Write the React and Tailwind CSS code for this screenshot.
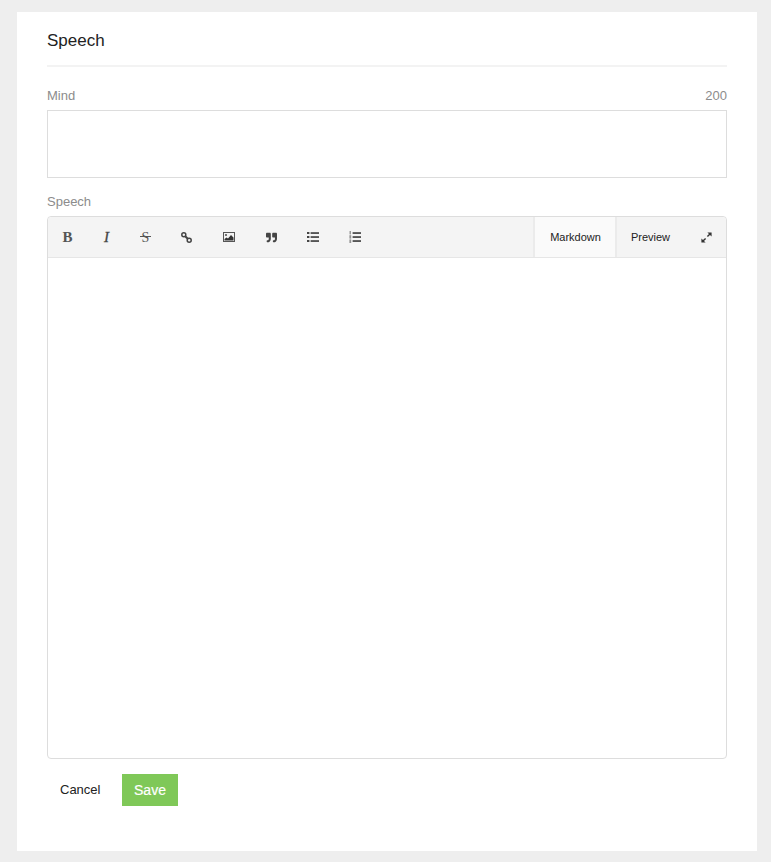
import { FaQuoteRight } from 'react-icons/fa'

const font = { fontFamily: '"Liberation Sans", Arial, sans-serif' }
const serif = { fontFamily: '"Liberation Serif", serif' }

function LinkIcon() {
  return (
    <svg width="11" height="11" viewBox="0 0 11 11" fill="none" stroke="#444" strokeWidth="1.5">
      <circle cx="2.8" cy="2.8" r="2" />
      <circle cx="8.2" cy="8.2" r="2" />
      <path d="M4.2 4.2 L6.8 6.8" strokeWidth="2" />
    </svg>
  )
}

function ImageIcon() {
  return (
    <svg width="12" height="10" viewBox="0 0 12 10">
      <rect x="0.5" y="0.5" width="11" height="9" fill="#f3f3f3" stroke="#555" />
      <circle cx="3" cy="3" r="1.1" fill="#555" />
      <path d="M1.5 8.5 V7 L3.5 5.4 L5 6.4 L8 3 L10.5 5.6 V8.5 Z" fill="#333" />
    </svg>
  )
}

function ListUl() {
  return (
    <svg width="12" height="10" viewBox="0 0 12 10" fill="#444">
      <rect x="0" y="0" width="2.4" height="2" />
      <rect x="0" y="4" width="2.4" height="2" />
      <rect x="0" y="8" width="2.4" height="2" />
      <rect x="3.6" y="0.2" width="8.4" height="1.7" />
      <rect x="3.6" y="4.2" width="8.4" height="1.7" />
      <rect x="3.6" y="8.2" width="8.4" height="1.7" />
    </svg>
  )
}

function ListOl() {
  return (
    <svg width="12" height="12" viewBox="0 0 12 12" fill="#444">
      <rect x="3.6" y="1.2" width="8.4" height="1.7" />
      <rect x="3.6" y="5.2" width="8.4" height="1.7" />
      <rect x="3.6" y="9.2" width="8.4" height="1.7" />
      <rect x="0.6" y="0" width="1.2" height="3.4" opacity="0.65" />
      <rect x="0.4" y="4.2" width="1.8" height="3.4" opacity="0.55" />
      <rect x="0.4" y="8.4" width="1.8" height="3.6" opacity="0.55" />
    </svg>
  )
}

function ExpandIcon() {
  return (
    <svg width="11" height="11" viewBox="0 0 11 11" fill="#333">
      <path d="M6.4 0.4 H10.6 V4.6 L9 3 L6.9 5.1 L5.9 4.1 L8 2 Z" />
      <path d="M4.6 10.6 H0.4 V6.4 L2 8 L4.1 5.9 L5.1 6.9 L3 9 Z" />
    </svg>
  )
}

const tools = [
  { w: 'w-[39px]', icon: <span className="text-[15px] font-bold text-[#555]" style={serif}>B</span> },
  { w: 'w-[39px]', icon: <span className="text-[15px] italic text-[#444] [-webkit-text-stroke:0.3px_#444]" style={serif}>I</span> },
  {
    w: 'w-[39px]',
    icon: (
      <span className="relative text-[14px] text-[#555]" style={serif}>
        S
        <span className="absolute top-[9px] -left-[2px] -right-[2px] h-px bg-[#555]" />
      </span>
    ),
  },
  { w: 'w-[43px]', icon: <LinkIcon /> },
  { w: 'w-[42px]', icon: <ImageIcon /> },
  { w: 'w-[42px]', icon: <FaQuoteRight size={11} color="#444" /> },
  { w: 'w-[42px]', icon: <ListUl /> },
  { w: 'w-[42px]', icon: <ListOl /> },
]

export default function App() {
  return (
    <div className="min-h-[862px] bg-[#eeeeee] pt-3 pb-[11px] pl-[17px] pr-[14px]" style={font}>
      <div className="h-[839px] bg-white px-[30px]">
        <h1 className="flex h-[55px] items-end border-b-2 border-[#f3f3f3] pb-[12px] text-[17px] leading-[24px] text-[#222]">Speech</h1>

        <div className="mt-[20px] flex h-[17px] items-center justify-between text-[13px] text-[#8c8c8c]">
          <span>Mind</span>
          <span>200</span>
        </div>
        <div className="mt-[6px] h-[68px] border border-[#ddd] bg-white" />

        <div className="mt-[15px] h-[17px] text-[13px] leading-[17px] text-[#8c8c8c]">Speech</div>

        <div className="mt-[6px] h-[543px] rounded-[4px] border border-[#ddd] bg-white">
          <div className="flex h-[41px] items-stretch justify-between rounded-t-[4px] border-b border-[#e6e6e6] bg-[#f4f4f4]">
            <div className="flex items-center">
              {tools.map((t, i) => (
                <div key={i} className={`flex h-full items-center justify-center ${t.w}`}>{t.icon}</div>
              ))}
            </div>
            <div className="flex items-stretch text-[11px] text-[#222]">
              <div className="flex w-[84px] items-center justify-center border-x-2 border-[#ebebeb] bg-[#fafafa] pl-[1px]">Markdown</div>
              <div className="flex w-[69px] items-center justify-center pr-[2px]">Preview</div>
              <div className="flex w-[40px] items-center justify-center"><ExpandIcon /></div>
            </div>
          </div>
        </div>

        <div className="mt-[15px] flex items-center">
          <button className="w-[75px] pl-[13px] text-left text-[13px] text-[#222]">Cancel</button>
          <button className="h-8 w-14 bg-[#7fc858] text-[14px] text-white [-webkit-text-stroke:0.2px_#fff]">Save</button>
        </div>
      </div>
    </div>
  )
}
